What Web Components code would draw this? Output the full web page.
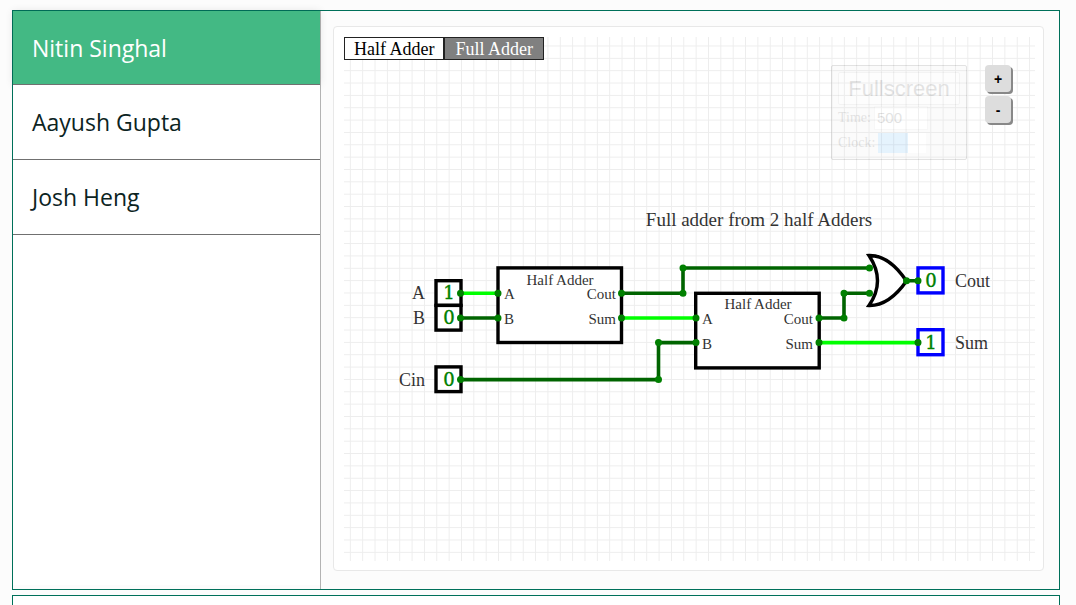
<!DOCTYPE html>
<html lang="en">
<head>
<meta charset="utf-8">
<title>Circuit projects</title>
<style>
  body { margin: 0; background: #fcfcfc; font-family: "Open Sans", sans-serif; color: #0c241f; }
</style>
</head>
<body>
<grading-page>
  <project-panel>
    <student-list slot="side">
      <student-tab active>Nitin Singhal</student-tab>
      <student-tab>Aayush Gupta</student-tab>
      <student-tab>Josh Heng</student-tab>
    </student-list>
    <simulator-card>
      <circuit-canvas></circuit-canvas>
      <circuit-tabs slot="tabs"></circuit-tabs>
      <sim-settings slot="tools"></sim-settings>
      <zoom-controls slot="tools"></zoom-controls>
    </simulator-card>
  </project-panel>
  <next-panel></next-panel>
</grading-page>

<script>
function define(name, html) {
  const template = document.createElement("template");
  template.innerHTML = html;
  customElements.define(name, class extends HTMLElement {
    constructor() {
      super();
      this.attachShadow({ mode: "open" }).append(template.content.cloneNode(true));
    }
  });
}

define("grading-page", `
  <style>
    :host { display: flex; flex-direction: column; gap: 5px; box-sizing: border-box;
      min-height: 100vh; padding: 10px 16px 0 12px; }
  </style>
  <slot></slot>`);

define("project-panel", `
  <style>
    :host { display: flex; border: 1px solid #00705a; }
    .side { flex: 0 0 308px; box-sizing: border-box; border-right: 1px solid #b3b3b3;
      display: flex; padding-bottom: 4px; }
    main { flex: 1; min-width: 0; padding: 15px 15px 18px 12px; }
  </style>
  <div class="side"><slot name="side"></slot></div>
  <main><slot></slot></main>`);

define("next-panel", `
  <style>
    :host { display: block; flex: 1; background: #fff; border: 1px solid #00705a; border-bottom: 0; }
  </style>`);

define("student-list", `
  <style>
    :host { display: block; flex: 1; background: #fff; }
    nav { display: flex; flex-direction: column; }
  </style>
  <nav aria-label="Students"><slot></slot></nav>`);

define("student-tab", `
  <style>
    :host { display: block; }
    button { display: block; width: 100%; height: 75px; padding: 0 19px; border: 0;
      border-bottom: 1px solid #707070; background: #fff; color: inherit;
      font: 23px/32px "Open Sans", sans-serif; text-align: left; cursor: pointer; }
    :host([active]) button { height: 74px; background: #43b984; color: #fff; box-shadow: 0 0 8px rgba(0,0,0,.1); }
  </style>
  <button type="button"><slot></slot></button>`);

define("simulator-card", `
  <style>
    :host { display: block; position: relative; background: #fff; border: 1px solid #e8e8e8;
      border-radius: 4px; padding: 10px 8px 9px 10px; }
    .tabs { position: absolute; left: 10px; top: 10px; }
    .tools { position: absolute; right: 30px; top: 38px; display: flex; gap: 18px; align-items: flex-start; }
  </style>
  <slot></slot>
  <div class="tabs"><slot name="tabs"></slot></div>
  <div class="tools"><slot name="tools"></slot></div>`);

define("circuit-tabs", `
  <style>
    :host { display: flex; }
    button { height: 23px; padding: 0 9px; border: 1px solid #222; background: #fff; color: #000;
      font: 18px/20px "Liberation Serif", serif; cursor: pointer; }
    button + button { padding: 0 10px; background: #808080; color: #fff; border-left-width: 1px; }
  </style>
  <button type="button">Half Adder</button><button type="button">Full Adder</button>`);

define("sim-settings", `
  <style>
    :host { display: block; box-sizing: border-box; width: 136px; height: 95px; padding: 6px;
      border: 1px solid #000; border-radius: 2px; background: #ddd; opacity: .11;
      font: 14px/20px "Liberation Serif", serif; color: #000; }
    button { display: block; width: 100%; height: 33px; padding: 0; border: 1px solid #999;
      border-radius: 2px; background: #eee; color: #000; font: 22px/30px "Liberation Sans", sans-serif; }
    .row { display: flex; align-items: center; gap: 3px; height: 25px; }
    input { margin: 0; box-sizing: border-box; }
    [type=number] { width: 54px; height: 24px; padding: 0 2px; border: 1px solid #bbb; background: #fff;
      font: 15px/20px "Liberation Sans", sans-serif; appearance: textfield; }
    [type=checkbox] { appearance: none; width: 48px; height: 20px;
      background: linear-gradient(90deg, #2196f3 30px, #fff 30px); }
  </style>
  <button type="button">Fullscreen</button>
  <div class="row"><label for="time">Time:</label><input id="time" type="number" value="500"></div>
  <div class="row"><label for="clock">Clock:</label><input id="clock" type="checkbox" checked></div>`);

define("zoom-controls", `
  <style>
    :host { display: flex; flex-direction: column; gap: 3px; }
    button { box-sizing: border-box; width: 26px; height: 27px; padding: 0; border: 0;
      border-radius: 4px; background: #ddd; color: #000; box-shadow: 2px 2px 0 #888;
      margin: 0 2px 1px 0; font: bold 14px/20px "Liberation Sans", sans-serif; cursor: pointer; }
  </style>
  <button type="button" aria-label="Zoom in">+</button>
  <button type="button" aria-label="Zoom out">-</button>`);

define("circuit-canvas", `
  <style>
    :host { display: block; }
    svg { display: block; width: 100%; height: auto; }
    text { font-family: "Liberation Serif", serif; font-size: 18px; fill: #333; }
    .small text { font-size: 15px; }
    text.title { font-size: 19px; }
    .mid { text-anchor: middle; }
    .end { text-anchor: end; }
    .bit text { font-family: "DejaVu Serif", serif; font-size: 18px; fill: #008000;
      stroke: #008000; stroke-width: .4; text-anchor: middle; }
    .box { fill: #fff; stroke: #000; stroke-width: 3.4; }
    .out { fill: #fff; stroke: #00f; stroke-width: 3.4; }
    .wire { fill: none; stroke-width: 3.6; stroke-linejoin: round; }
    .off { stroke: #006400; }
    .on { stroke: #0f0; }
    .nodes { fill: none; stroke: #008000; stroke-width: 7; stroke-linecap: round; }
  </style>
  <svg viewBox="344 37 691 524" role="img" aria-label="Full adder circuit">
    <defs>
      <pattern id="grid" x="344.15" y="39.8" width="12.35" height="12.35" patternUnits="userSpaceOnUse">
        <path d="M6.2 0V12.35M0 6.2H12.35" stroke="#ededed" stroke-width="1" fill="none"/>
      </pattern>
    </defs>
    <rect x="344" y="37" width="691" height="524" fill="url(#grid)"/>
    <text class="title mid" x="759" y="226">Full adder from 2 half Adders</text>

    <g class="box">
      <rect x="436" y="280.7" width="25" height="24.7"/>
      <rect x="436" y="305.4" width="25" height="24.7"/>
      <rect x="436" y="366.9" width="25" height="24.7"/>
      <rect x="498" y="267.9" width="123.5" height="74.6"/>
      <rect x="695.7" y="293.3" width="123.5" height="74.6"/>
      <path d="M869 255.5Q889 255 906.5 281Q889 306 869 305.5Q886 281 869 255.5Z"/>
    </g>
    <g class="out">
      <rect x="918" y="267.9" width="25" height="25"/>
      <rect x="918" y="329.7" width="25" height="25"/>
    </g>

    <g class="wire off">
      <path d="M460.5 318H498M621.5 293.3H683V268H869.5M819 318H844V293.3H869.5M460.5 379.6H658.5V342.6H696M906.5 280.8H918"/>
    </g>
    <g class="wire on">
      <path d="M460.5 293.3H498M621.5 318H696M819 342.6H918"/>
    </g>
    <path class="nodes" d="M460.5 293.3h0M460.5 318h0M460.5 379.6h0M498 293.3h0M498 318h0M621.5 293.3h0M621.5 318h0M683 293.3h0M683 268h0M869.5 268h0M869.5 293.3h0M844 293.3h0M844 318h0M819 318h0M819 342.6h0M696 318h0M696 342.6h0M658.5 342.6h0M658.5 379.6h0M906.5 280.8h0M918 280.8h0M918 342.6h0"/>

    <g class="end">
      <text x="425" y="299">A</text>
      <text x="425" y="324">B</text>
      <text x="425" y="386">Cin</text>
    </g>
    <g>
      <text x="955" y="287">Cout</text>
      <text x="955" y="349">Sum</text>
    </g>
    <g class="bit">
      <text x="449" y="299">1</text>
      <text x="449" y="324">0</text>
      <text x="449" y="386">0</text>
      <text x="931" y="287">0</text>
      <text x="931" y="349">1</text>
    </g>
    <g class="small">
      <text class="mid" x="560" y="285">Half Adder</text>
      <text x="504" y="299">A</text>
      <text x="504" y="324">B</text>
      <text class="end" x="616" y="299">Cout</text>
      <text class="end" x="616" y="324">Sum</text>
      <text class="mid" x="758" y="309">Half Adder</text>
      <text x="702" y="324">A</text>
      <text x="702" y="349">B</text>
      <text class="end" x="813" y="324">Cout</text>
      <text class="end" x="813" y="349">Sum</text>
    </g>
  </svg>`);
</script>
</body>
</html>
